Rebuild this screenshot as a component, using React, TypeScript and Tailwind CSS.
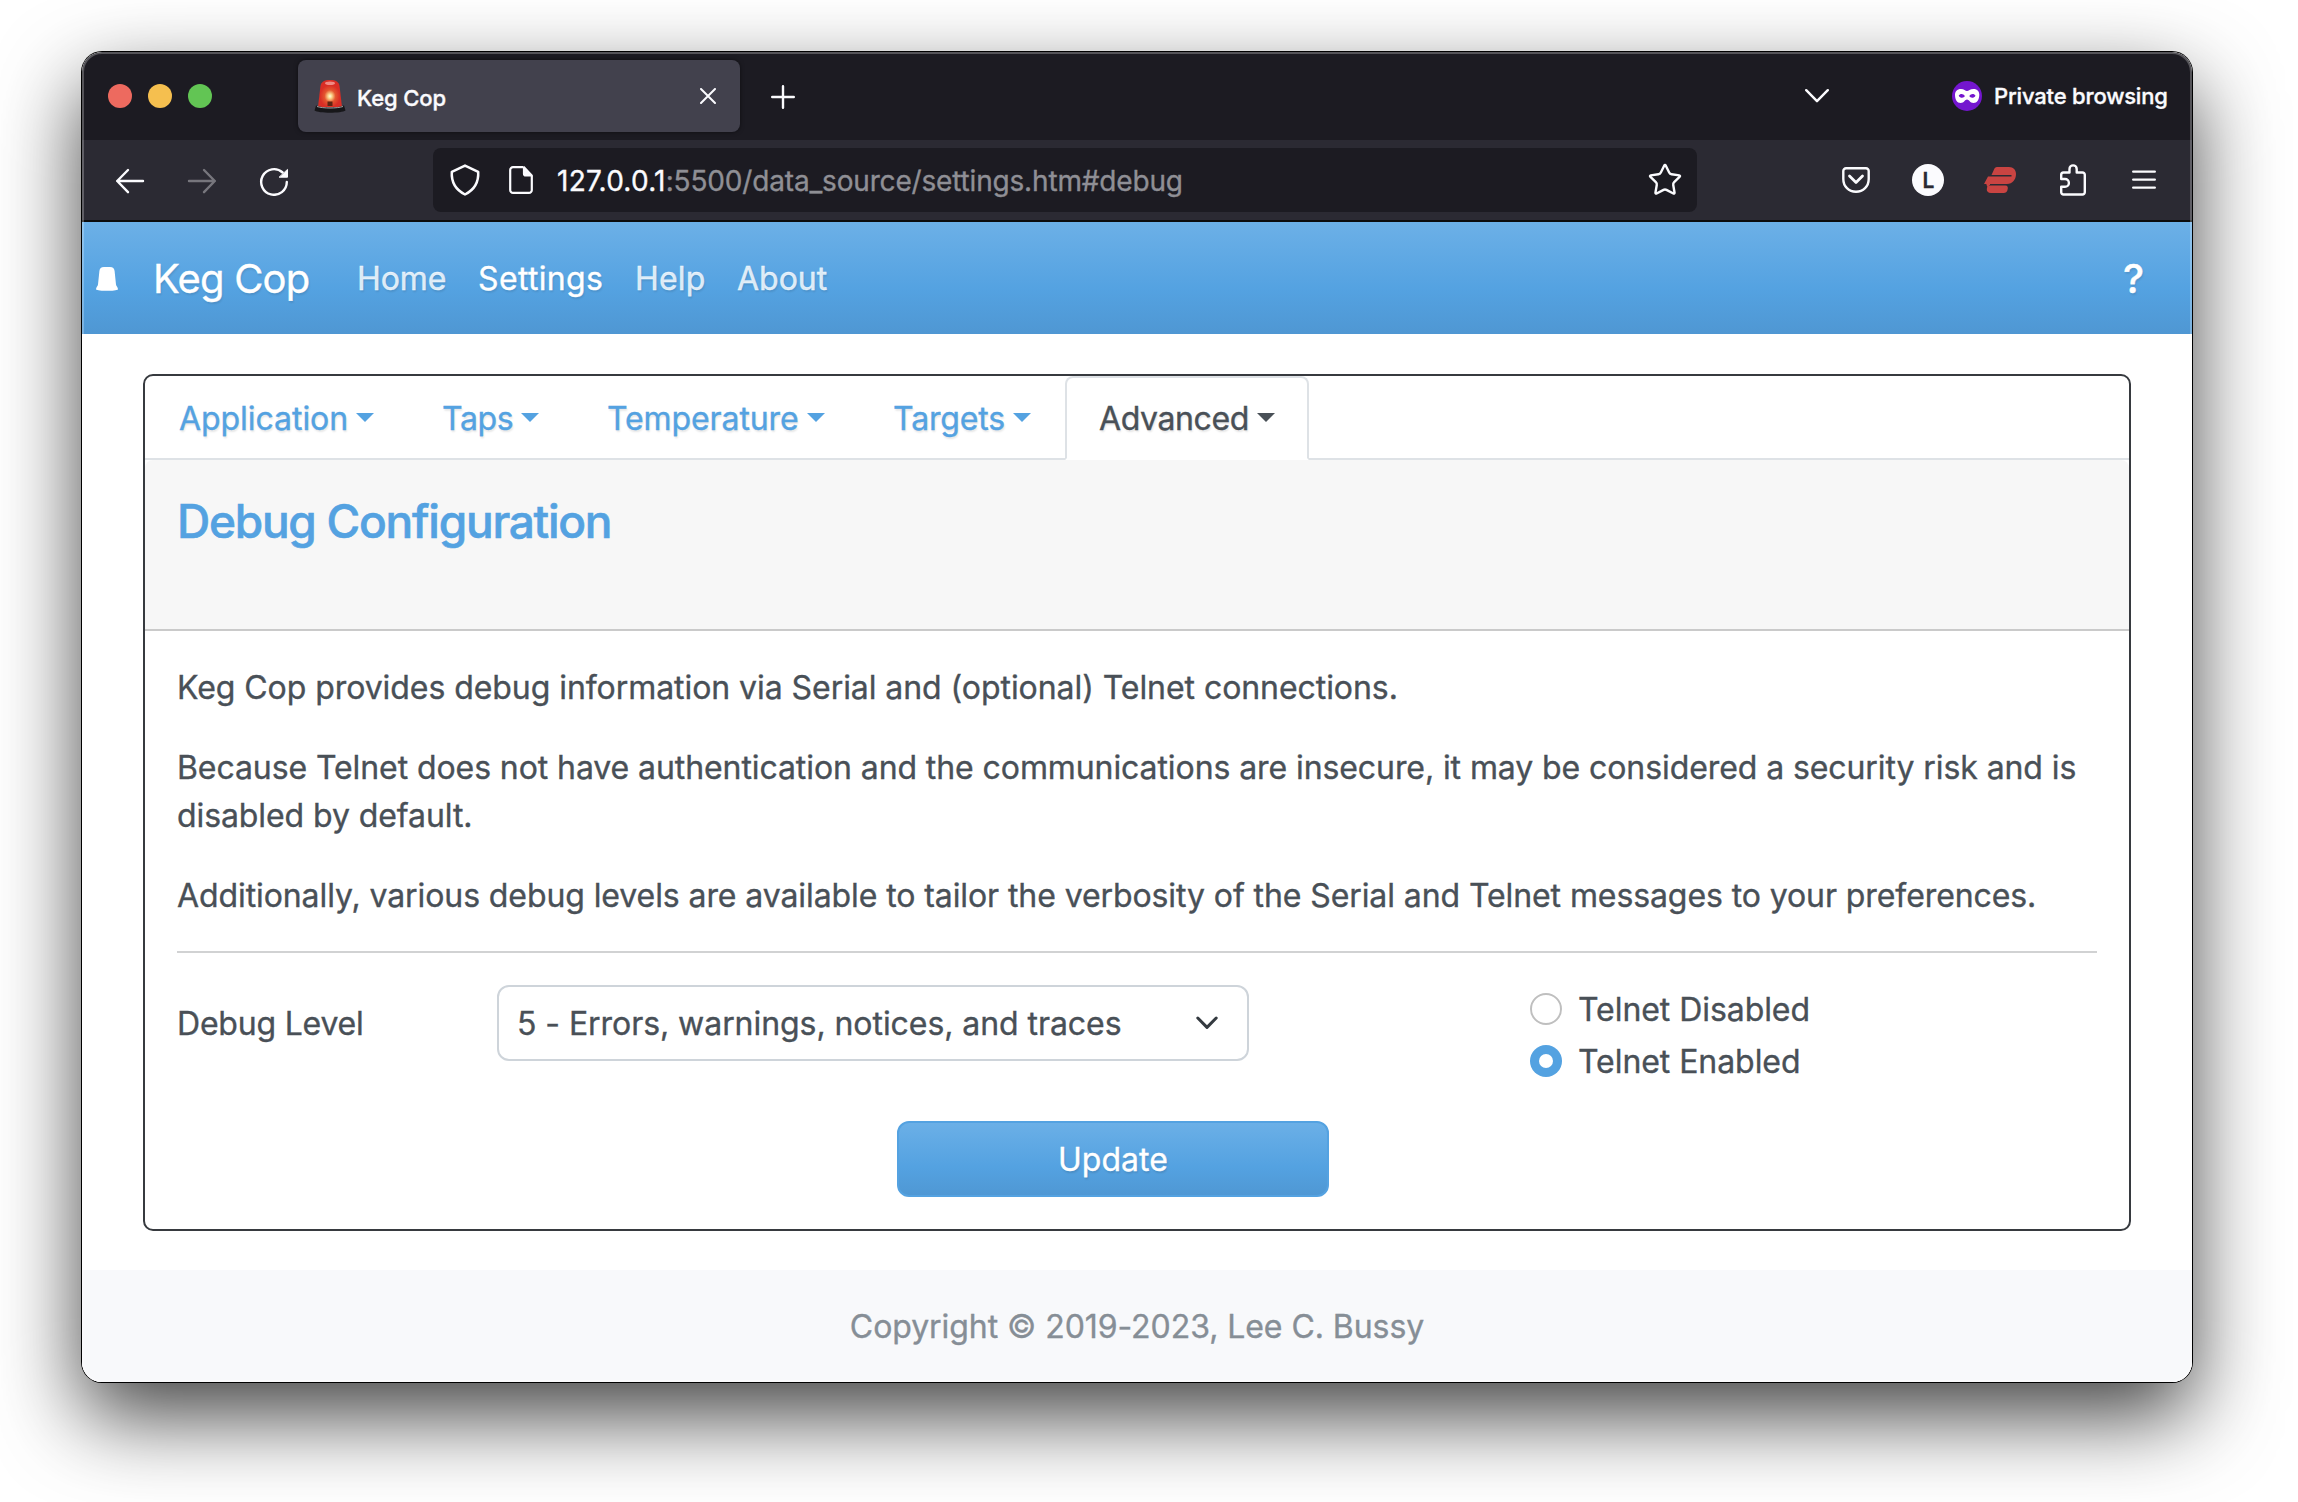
import type { ReactNode } from "react";
import { Star } from "lucide-react";

const GRADIENT = "bg-[linear-gradient(180deg,#6cb0e7_0%,#54a2e1_60%,#4f97d3_100%)]";

function Siren() {
  return (
    <svg width="32" height="34" viewBox="0 0 32 34" className="shrink-0">
      <defs>
        <radialGradient id="glow" cx="0.5" cy="0.6" r="0.42">
          <stop offset="0" stopColor="#fffbe0" />
          <stop offset="0.2" stopColor="#fbd48a" />
          <stop offset="0.55" stopColor="#e4552f" />
          <stop offset="1" stopColor="#d92d25" />
        </radialGradient>
      </defs>
      <path d="M4 28 6.400 7.500C7 2.800 10.200 1 16 1s9 1.800 9.600 6.500L28 28z" fill="url(#glow)" />
      <ellipse cx="16" cy="4.200" rx="5" ry="1.800" fill="#f08a84" />
      <path d="M13.500 22.500h5V27h-5z" fill="#5d2412" />
      <path d="M2 26.500c6 2.500 22 2.500 28 0l1.500 5c-4 3-27 3-31 0z" fill="#17171a" />
      <path d="M3 27.500c6 2 20 2 26 0" stroke="#a9a0a0" strokeWidth="1" fill="none" />
    </svg>
  );
}

function TitleBar() {
  return (
    <div className="flex h-[88px] items-center bg-[#1c1b22] pl-[26px] text-[22px] font-medium text-[#fbfbfe]">
      <div className="flex gap-4">
        <span className="size-6 rounded-full bg-[#ed6a5f]" />
        <span className="size-6 rounded-full bg-[#f5bf4f]" />
        <span className="size-6 rounded-full bg-[#62c554]" />
      </div>
      <div className="ml-[86px] flex h-[72px] w-[442px] items-center rounded-lg bg-[#42414d] pr-6 pl-4 shadow-[0_0_4px_rgba(0,0,0,0.5)]">
        <Siren />
        <span className="ml-[11px] pt-[5px] tracking-[-0.1px]">Keg Cop</span>
        <svg width="16" height="16" viewBox="0 0 16 16" className="ml-auto" stroke="currentColor" strokeWidth="2" strokeLinecap="round">
          <path d="m1 1 14 14M15 1 1 15" />
        </svg>
      </div>
      <svg width="24" height="24" viewBox="0 0 24 24" className="mt-[2px] ml-[31px]" stroke="currentColor" strokeWidth="2.400" strokeLinecap="round">
        <path d="M12 1.200v21.600M1.200 12h21.600" />
      </svg>
      <svg width="24" height="14" viewBox="0 0 24 14" className="ml-[1010px]" fill="none" stroke="currentColor" strokeWidth="2.400" strokeLinecap="round" strokeLinejoin="round">
        <path d="m1.200 1.200 10.800 11 10.800-11" />
      </svg>
      <svg width="30" height="30" viewBox="0 0 30 30" className="ml-[123px]">
        <circle cx="15" cy="15" r="15" fill="#7416cf" />
        <path
          fill="#fff"
          fillRule="evenodd"
          d="M9 8c3 0 4.500 2 6 2s3-2 6.500-2c4 0 5.800 2.500 5.800 5.500 0 5-2.300 8.500-5.800 8.500S17 18.500 15 18.500 12 22 8.700 22C5 22 3 18.500 3 13.500 3 10.500 5 8 9 8zM6.700 14.700c1.500 2.600 5 2.600 6.200.400-1.500-2.800-5-2.800-6.200-.400zm10.600.400c1.200 2.200 4.700 2.200 6.200-.400-1.200-2.400-4.700-2.400-6.200.400z"
        />
      </svg>
      <span className="ml-3 pt-px whitespace-nowrap tracking-[-0.18px]">Private browsing</span>
    </div>
  );
}

function Toolbar() {
  return (
    <div className="flex h-[82px] items-center border-b-2 border-[#0c0c0d] bg-[#2b2a33] pl-8 text-[#fbfbfe]">
      <svg width="32" height="32" viewBox="0 0 32 32" fill="none" stroke="currentColor" strokeWidth="2.400" strokeLinecap="round" strokeLinejoin="round">
        <path d="M29 17H3.200M14 6 3.200 17 14 28.200" />
      </svg>
      <svg width="32" height="32" viewBox="0 0 32 32" className="ml-10 text-[#77767d]" fill="none" stroke="currentColor" strokeWidth="2.400" strokeLinecap="round" strokeLinejoin="round">
        <path d="M3 17h25.800M18 6l10.800 11L18 28.200" />
      </svg>
      <svg width="32" height="32" viewBox="0 0 32 32" className="ml-10" fill="none" stroke="currentColor" strokeWidth="2.400" strokeLinecap="round">
        <path d="M28.800 18a12.800 12.800 0 1 1-4.200-9.500" />
        <path d="M29.500 5.800v7.400h-8z" fill="currentColor" strokeWidth="1" strokeLinejoin="round" />
      </svg>
      <div className="ml-[143px] flex h-16 w-[1264px] items-center rounded-lg bg-[#1c1b22] pl-4">
        <svg width="32" height="32" viewBox="0 0 32 32" fill="none" stroke="currentColor" strokeWidth="2.500" strokeLinejoin="round">
          <path d="M16 1.600 29.200 7.800C29.800 18 25 26 16 30.500 7 26 2.200 18 2.800 7.800z" />
        </svg>
        <svg width="28" height="32" viewBox="0 0 28 32" className="ml-[26px]" fill="none" stroke="currentColor" strokeWidth="2.200" strokeLinejoin="round">
          <path d="M16 3.200H6a2.800 2.800 0 0 0-2.800 2.800v20A2.800 2.800 0 0 0 6 28.900h16a2.800 2.800 0 0 0 2.800-2.900V11.500" />
          <path d="M17 3.200v6.600c0 1 .700 1.700 1.700 1.700h6z" fill="currentColor" />
        </svg>
        <div className="ml-[22px] pt-[2px] text-[28px] leading-none whitespace-nowrap">
          <span className="tracking-[0.25px]">127.0.0.1</span>
          <span className="tracking-[-0.17px] text-[#8f8f95]">:5500/data_source/settings.htm#debug</span>
        </div>
        <Star size={36} strokeWidth={1.600} className="mr-[14px] ml-auto" />
      </div>
      <svg width="28" height="26" viewBox="0 0 28 26" className="ml-[145px]" fill="none" stroke="currentColor" strokeWidth="2.400" strokeLinecap="round" strokeLinejoin="round">
        <path d="M4 1.300h20A2.700 2.700 0 0 1 26.700 4v8c0 7.500-5.500 12.700-12.700 12.700S1.300 19.500 1.300 12V4A2.700 2.700 0 0 1 4 1.300z" />
        <path d="m7.500 9 6.500 6.500L20.500 9" strokeWidth="2.800" />
      </svg>
      <span className="ml-[42px] flex size-8 items-center justify-center rounded-full bg-[#fbfbfe] pl-px text-[21px] leading-none font-semibold text-[#2b2a33]">L</span>
      <svg width="32" height="26" viewBox="0 0 32 26" className="ml-10" fill="#c94442">
        <path d="M13 0h12c4.500 0 7 3 7 7 0 5.500-3.500 10-9 10H0l4-7.500h23.500V8h-20L10 2.500C10.500 1 11.500 0 13 0z" />
        <path d="M3.500 18.500h18c2 0 2.500 1.500 2.300 3-.300 3-1.800 4.500-4.300 4.500H7c-3 0-4.500-2-4.200-4z" />
        <path d="M2 16h4v1.200l-1.500 2H3z" />
      </svg>
      <svg width="28" height="32" viewBox="0 0 28 32" className="ml-[43px]" fill="none" stroke="currentColor" strokeWidth="2.400" strokeLinejoin="round">
        <path d="M2.200 15v-4.200a2.300 2.300 0 0 1 2.300-2.300h6V5a3.600 3.600 0 0 1 7.200 0v3.500h5.800a2.300 2.300 0 0 1 2.300 2.300v17.400a2.300 2.300 0 0 1-2.300 2.300h-19a2.300 2.300 0 0 1-2.300-2.300v-5.400H6A3.900 3.900 0 0 0 6 15z" />
      </svg>
      <svg width="24" height="20" viewBox="0 0 24 20" className="ml-[45px]" stroke="currentColor" strokeWidth="2.400" strokeLinecap="round">
        <path d="M1.200 1.600h21.600M1.200 9.600h21.600M1.200 17.600h21.600" />
      </svg>
    </div>
  );
}

function NavBar() {
  return (
    <nav className={`flex h-28 items-center ${GRADIENT} pt-[2px] pr-[48px] pl-[14px] text-[32px] text-white/80 [text-shadow:1px_2px_2px_rgba(0,0,0,0.1)]`}>
      <svg width="22" height="24" viewBox="0 0 22 24" fill="#fff">
        <path d="M8 0h6c3 0 4.200 1.500 4.600 4L20 17.500c.200 1.800 2 2.500 2 5C20 24.300 2 24.300 0 22.500c0-2.500 1.800-3.200 2-5L3.400 4C3.800 1.500 5 0 8 0z" />
      </svg>
      <span className="ml-[35px] w-[204px] text-[40px] tracking-[-0.8px] text-white">Keg Cop</span>
      <span className="w-[121px] tracking-[-0.1px]">Home</span>
      <span className="w-[157px] tracking-[0.35px] text-white">Settings</span>
      <span className="w-[102px] tracking-[0.2px]">Help</span>
      <span>About</span>
      <span className="ml-auto text-[40px] font-medium text-white">?</span>
    </nav>
  );
}

function Caret() {
  return <span className="mb-[3px] ml-2 border-x-[9.6px] border-t-[9.6px] border-x-transparent border-t-current" />;
}

function Tab({ className, children }: { className: string; children: ReactNode }) {
  return (
    <span className={`flex h-[84px] items-center border-2 pt-[2px] pl-8 whitespace-nowrap ${className}`}>
      {children}
      <Caret />
    </span>
  );
}

function Radio({ label, checked }: { label: string; checked?: boolean }) {
  return (
    <label className="mb-1 flex h-12 items-center gap-4">
      <span
        className={
          checked
            ? "flex size-8 items-center justify-center rounded-full bg-[#54a2e1]"
            : "size-8 rounded-full border-2 border-[#bfbfbf] bg-white"
        }
      >
        {checked && <span className="size-[14px] rounded-full bg-white" />}
      </span>
      <span className="pt-[2px]">{label}</span>
    </label>
  );
}

function SettingsCard() {
  return (
    <section className="mx-[61px] mt-10 rounded-[10px] border-2 border-[#373a3f]">
      <div className="flex text-[#54a2e1] shadow-[inset_0_-2px_0_#dee2e6] [text-shadow:1px_2px_2px_rgba(0,0,0,0.1)]">
        <Tab className="w-[263px] border-transparent tracking-[-0.05px]">Application</Tab>
        <Tab className="w-[165px] border-transparent tracking-[-0.4px]">Taps</Tab>
        <Tab className="w-[286px] border-transparent tracking-[-0.1px]">Temperature</Tab>
        <Tab className="w-[206px] border-transparent tracking-[-0.15px]">Targets</Tab>
        <Tab className="w-[244px] rounded-t-lg border-[#dee2e6] border-b-white bg-white tracking-[-0.4px] text-[#495057]">
          Advanced
        </Tab>
      </div>
      <header className="h-[171px] rounded-t-lg border-b-2 border-[#cacaca] bg-[#f7f7f7] pt-[33px] pl-8">
        <h1 className="text-[46px] leading-[56px] font-medium tracking-[-1.25px] text-[#54a2e1] [-webkit-text-stroke:0.6px_currentColor]">
          Debug Configuration
        </h1>
      </header>
      <div className="px-8 pt-[33px] pb-8">
        <div className="flex flex-col gap-8 leading-[48px]">
          <p className="tracking-[-0.06px]">Keg Cop provides debug information via Serial and (optional) Telnet connections.</p>
          <p className="tracking-[-0.085px]">
            Because Telnet does not have authentication and the communications are insecure, it may be considered a
            security risk and is disabled by default.
          </p>
          <p className="tracking-[-0.09px]">
            Additionally, various debug levels are available to tailor the verbosity of the Serial and Telnet messages to
            your preferences.
          </p>
        </div>
        <hr className="mt-[31px] mb-8 border-t-2 border-[#d1d2d3]" />
        <div className="grid grid-cols-[320px_752px_1fr] tracking-[-0.06px]">
          <span className="pt-[15px] leading-[48px] tracking-[-0.2px]">Debug Level</span>
          <div className="flex h-[76px] items-center justify-between rounded-xl border-2 border-[#ced4da] pr-[29px] pl-[18px]">
            <span className="pt-[2px]">5 - Errors, warnings, notices, and traces</span>
            <svg width="22" height="14" viewBox="0 0 22 14" fill="none" stroke="#343a40" strokeWidth="3" strokeLinecap="round" strokeLinejoin="round">
              <path d="m1.800 2 9.200 9.400L20.200 2" />
            </svg>
          </div>
          <div className="pl-[281px]">
            <Radio label="Telnet Disabled" />
            <Radio label="Telnet Enabled" checked />
          </div>
        </div>
        <button
          className={`mt-8 ml-[720px] block h-[76px] w-[432px] rounded-xl border-2 border-[#54a2e1] ${GRADIENT} bg-origin-border pt-[2px] tracking-[0.05px] text-white [text-shadow:1px_2px_2px_rgba(0,0,0,0.12)]`}
        >
          Update
        </button>
      </div>
    </section>
  );
}

export default function App() {
  return (
    <div className="h-[1502px] w-[2298px] overflow-hidden bg-white pt-[52px] pl-[82px] font-['Inter',sans-serif]">
      <div className="relative h-[1330px] w-[2110px] rounded-[20px] shadow-[0_0_0_1px_#000,0_34px_84px_rgba(0,0,0,0.74)]">
        <div className="flex h-full flex-col overflow-hidden rounded-[20px] bg-white text-[32px] text-[#495057] [-webkit-text-stroke:0.35px_currentColor]">
          <TitleBar />
          <Toolbar />
          <NavBar />
          <SettingsCard />
          <footer className="mt-auto flex h-28 items-center justify-center bg-[#f8f9fb] pt-[2px] tracking-[-0.06px] text-[#868e96]">
            Copyright © 2019-2023, Lee C. Bussy
          </footer>
        </div>
        <div className="pointer-events-none absolute inset-0 rounded-[20px] border-2 border-white/25" />
      </div>
    </div>
  );
}
